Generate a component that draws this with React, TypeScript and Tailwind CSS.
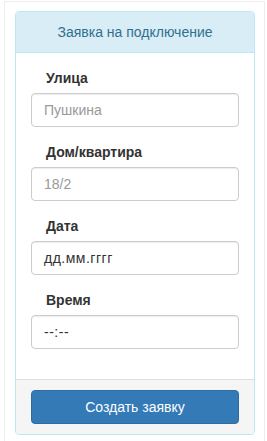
const fields = [
  { label: "Улица", value: "Пушкина", placeholder: true },
  { label: "Дом/квартира", value: "18/2", placeholder: true },
  { label: "Дата", value: "дд.мм.гггг", placeholder: false },
  { label: "Время", value: "--:--", placeholder: false },
];

export default function App() {
  return (
    <div
      className="w-[267px] h-[441px] bg-white text-[14px] leading-[20px] text-[#333] overflow-hidden"
      style={{ fontFamily: '"Liberation Sans", Arial, sans-serif' }}
    >
      <div className="ml-[4px] mt-[1px] w-[261px] h-[440px] border-l border-t border-r border-[#eee] pl-[10px] pr-[9px] pt-[9px]">
        <div className="w-[240px] rounded-[4px] border border-[#bce8f1] bg-white overflow-hidden">
          {/* Heading */}
          <div className="bg-[#d9edf7] border-b border-[#bce8f1] py-[10px] px-[15px] text-center text-[14px] leading-[20px] text-[#31708f]">
            Заявка на подключение
          </div>

          {/* Body */}
          <div className="p-[15px]">
            {fields.map((f) => (
              <div key={f.label} className="flex flex-col mb-[15px]">
                <label className="pl-[15px] mb-[5px] font-bold leading-[20px]">{f.label}</label>
                <div className="h-[34px] rounded-[4px] border border-[#ccc] px-[12px] py-[6px] shadow-[inset_0_1px_1px_rgba(0,0,0,0.075)] flex items-center">
                  <span className={f.placeholder ? "text-[#999]" : "text-[#333] tracking-[0.5px]"}>
                    {f.value}
                  </span>
                </div>
              </div>
            ))}
          </div>

          {/* Footer */}
          <div className="bg-[#f5f5f5] border-t border-[#ddd] py-[10px] px-[15px]">
            <button className="w-full h-[34px] rounded-[4px] border border-[#2e6da4] bg-[#337ab7] text-white text-[14px]">
              Создать заявку
            </button>
          </div>
        </div>
      </div>
    </div>
  );
}
